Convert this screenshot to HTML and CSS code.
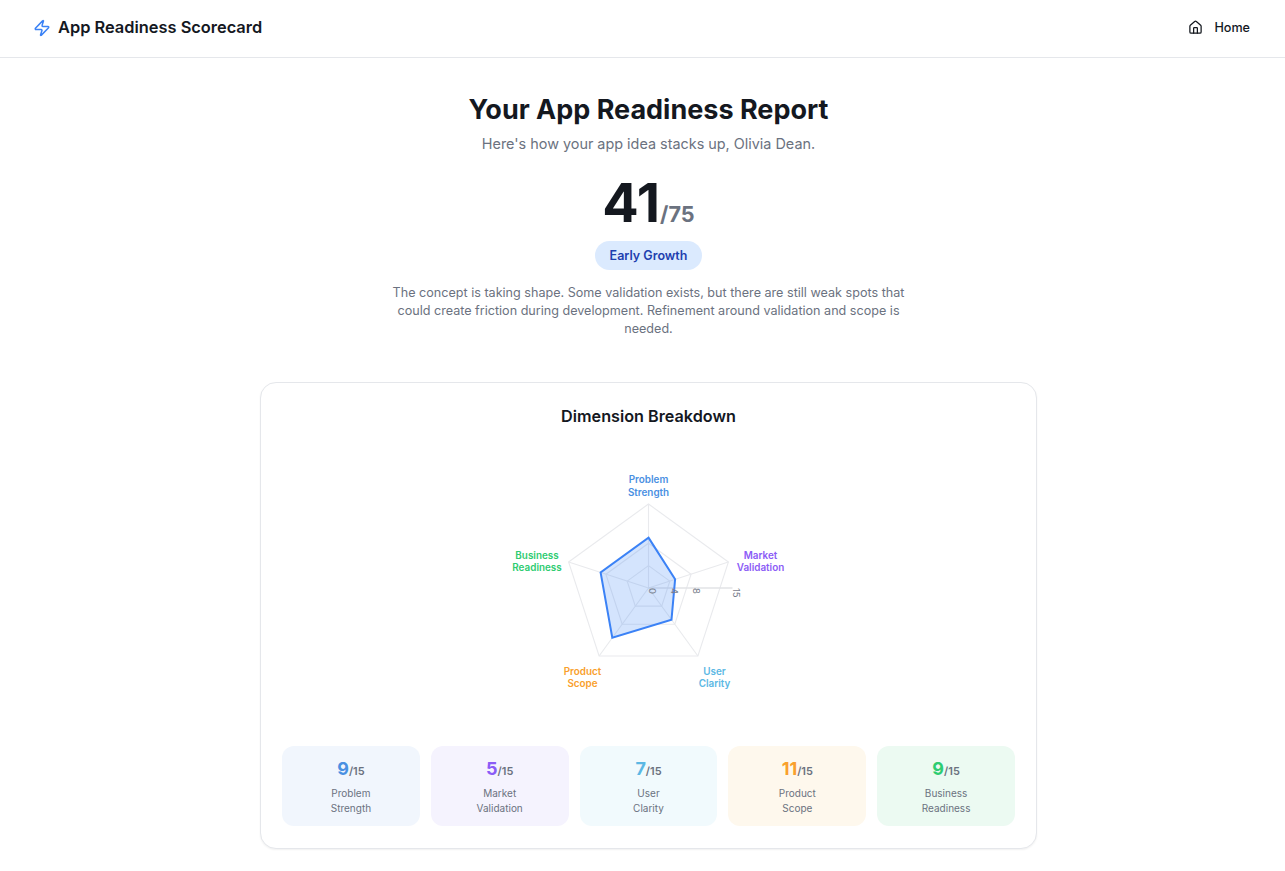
FILE: index.html
```html
<!DOCTYPE html>
<html lang="en">
<head>
    <meta charset="UTF-8">
    <meta name="viewport" content="width=device-width, initial-scale=1.0">
    <title>App Readiness Scorecard</title>
    <link rel="stylesheet" href="styles.css">
</head>
<body>
    <header class="navbar">
        <div class="brand">
            <svg class="brand-icon" viewBox="0 0 24 24" fill="none" stroke="currentColor" stroke-width="2" stroke-linecap="round" stroke-linejoin="round">
                <path d="M4 14a1 1 0 0 1-.78-1.63l9.9-10.2a.5.5 0 0 1 .86.46l-1.92 6.02A1 1 0 0 0 13 10h7a1 1 0 0 1 .78 1.63l-9.9 10.2a.5.5 0 0 1-.86-.46l1.92-6.02A1 1 0 0 0 11 14z"/>
            </svg>
            <span>App Readiness Scorecard</span>
        </div>
        <a class="home-link" href="#">
            <svg class="home-icon" viewBox="0 0 24 24" fill="none" stroke="currentColor" stroke-width="2" stroke-linecap="round" stroke-linejoin="round">
                <path d="M15 21v-8a1 1 0 0 0-1-1h-4a1 1 0 0 0-1 1v8"/>
                <path d="M3 10a2 2 0 0 1 .709-1.528l7-5.999a2 2 0 0 1 2.582 0l7 5.999A2 2 0 0 1 21 10v9a2 2 0 0 1-2 2H5a2 2 0 0 1-2-2z"/>
            </svg>
            <span>Home</span>
        </a>
    </header>

    <main class="report">
        <h1>Your App Readiness Report</h1>
        <p class="subtitle">Here's how your app idea stacks up, Olivia Dean.</p>
        <div class="total"><span class="total-score">41</span><span class="total-max">/75</span></div>
        <div class="stage-pill">Early Growth</div>
        <p class="summary">The concept is taking shape. Some validation exists, but there are still weak spots that could create friction during development. Refinement around validation and scope is needed.</p>

        <section class="card">
            <h2>Dimension Breakdown</h2>

            <!-- Radar chart, origin is the centre of the pentagon -->
            <svg class="radar" viewBox="-199.5 -140 400 280" width="400" height="280">
                <g class="radar-grid">
                    <polygon points="0,-84 79.9,-26 49.4,68 -49.4,68 -79.9,-26"/>
                    <polygon points="0,-44.8 42.6,-13.8 26.3,36.2 -26.3,36.2 -42.6,-13.8"/>
                    <polygon points="0,-22.4 21.3,-6.9 13.2,18.1 -13.2,18.1 -21.3,-6.9"/>
                    <line x1="0" y1="0" x2="0" y2="-84"/>
                    <line x1="0" y1="0" x2="79.9" y2="-26"/>
                    <line x1="0" y1="0" x2="49.4" y2="68"/>
                    <line x1="0" y1="0" x2="-49.4" y2="68"/>
                    <line x1="0" y1="0" x2="-79.9" y2="-26"/>
                </g>
                <line class="radar-axis" x1="0" y1="0" x2="84" y2="0"/>
                <polygon class="radar-data" points="0,-50.4 26.6,-8.7 23,31.7 -36.2,49.8 -47.9,-15.6"/>
                <g class="radar-ticks">
                    <text transform="translate(0 0) rotate(90)">0</text>
                    <text transform="translate(22.4 0) rotate(90)">4</text>
                    <text transform="translate(44.8 0) rotate(90)">8</text>
                    <text transform="translate(84 0) rotate(90)">15</text>
                </g>
                <g class="radar-labels">
                    <text class="c-problem"><tspan x="0" y="-105">Problem</tspan><tspan x="0" y="-92">Strength</tspan></text>
                    <text class="c-market"><tspan x="112" y="-29">Market</tspan><tspan x="112" y="-17">Validation</tspan></text>
                    <text class="c-user"><tspan x="66" y="87">User</tspan><tspan x="66" y="99">Clarity</tspan></text>
                    <text class="c-scope"><tspan x="-66" y="87">Product</tspan><tspan x="-66" y="99">Scope</tspan></text>
                    <text class="c-business"><tspan x="-111.5" y="-29">Business</tspan><tspan x="-111.5" y="-17">Readiness</tspan></text>
                </g>
            </svg>

            <div class="tiles">
                <div class="tile tile-problem">
                    <div class="tile-value"><strong class="c-problem">9</strong><span>/15</span></div>
                    <div class="tile-label">Problem<br>Strength</div>
                </div>
                <div class="tile tile-market">
                    <div class="tile-value"><strong class="c-market">5</strong><span>/15</span></div>
                    <div class="tile-label">Market<br>Validation</div>
                </div>
                <div class="tile tile-user">
                    <div class="tile-value"><strong class="c-user">7</strong><span>/15</span></div>
                    <div class="tile-label">User<br>Clarity</div>
                </div>
                <div class="tile tile-scope">
                    <div class="tile-value"><strong class="c-scope">11</strong><span>/15</span></div>
                    <div class="tile-label">Product<br>Scope</div>
                </div>
                <div class="tile tile-business">
                    <div class="tile-value"><strong class="c-business">9</strong><span>/15</span></div>
                    <div class="tile-label">Business<br>Readiness</div>
                </div>
            </div>
        </section>
    </main>
</body>
</html>
```

FILE: styles.css
```css
* {
    box-sizing: border-box;
}
body {
    font-family: Inter, "Liberation Sans", sans-serif;
    margin: 0;
    background-color: #ffffff;
    color: #14181f;
}
.navbar {
    display: flex;
    align-items: center;
    justify-content: space-between;
    height: 58px;
    padding: 0 35px 3px 33px;
    border-bottom: 1px solid #e5e7eb;
}
.brand {
    display: flex;
    align-items: center;
    gap: 7px;
    font-size: 16.4px;
    font-weight: 600;
}
.brand-icon {
    width: 18px;
    height: 18px;
    margin-top: 2px;
    color: #3b82f6;
}
.home-link {
    display: flex;
    align-items: center;
    gap: 11px;
    font-size: 12.6px;
    font-weight: 500;
    color: #14181f;
    text-decoration: none;
}
.home-icon {
    width: 15px;
    height: 15px;
    margin-top: 1px;
}
.report {
    display: flex;
    flex-direction: column;
    align-items: center;
    padding: 35px 0 21px 12px;
    text-align: center;
}
h1 {
    margin: 0;
    font-size: 27px;
    line-height: 34px;
    font-weight: 700;
}
.subtitle {
    margin: 7px 0 0;
    font-size: 14.4px;
    line-height: 20px;
    color: #6b7280;
}
.total {
    margin-top: 18px;
    height: 62px;
    line-height: 62px;
}
.total-score {
    font-size: 54px;
    font-weight: 700;
}
.total-max {
    font-size: 21.6px;
    font-weight: 700;
    color: #6b7280;
}
.stage-pill {
    margin-top: 7px;
    padding: 0 15px;
    height: 29px;
    line-height: 29px;
    border-radius: 15px;
    background-color: #dbeafe;
    color: #1e40af;
    font-size: 12.5px;
    font-weight: 600;
}
.summary {
    width: 530px;
    margin: 14px 0 0;
    font-size: 12.6px;
    line-height: 17.8px;
    color: #6b7280;
}
.card {
    width: 777px;
    margin-top: 44.5px;
    padding: 22px 21px;
    border: 1px solid #e5e7eb;
    border-radius: 16px;
    background-color: white;
    box-shadow: 0 1px 2px rgba(0, 0, 0, 0.06);
}
h2 {
    margin: 0;
    font-size: 16.2px;
    line-height: 22px;
    font-weight: 600;
}
.radar {
    display: block;
    margin: 21px auto 18px;
}
.radar-grid polygon,
.radar-grid line {
    fill: none;
    stroke: #e9eaed;
    stroke-width: 1.1;
}
.radar-axis {
    stroke: #e2e3e6;
    stroke-width: 1.5;
}
.radar-data {
    fill: rgba(59, 130, 246, 0.22);
    stroke: #3b82f6;
    stroke-width: 2;
}
.radar-ticks text {
    font-size: 9.5px;
    fill: #7a808c;
}
.radar-labels text {
    font-size: 9.9px;
    font-weight: 600;
    text-anchor: middle;
}
.c-problem {
    color: #4a90e2;
    fill: #4a90e2;
}
.c-market {
    color: #8b5cf6;
    fill: #8b5cf6;
}
.c-user {
    color: #5bb8e4;
    fill: #5bb8e4;
}
.c-scope {
    color: #f9a02c;
    fill: #f9a02c;
}
.c-business {
    color: #2ecc71;
    fill: #2ecc71;
}
.tiles {
    display: grid;
    grid-template-columns: repeat(5, 1fr);
    gap: 11px;
}
.tile {
    height: 80px;
    padding-top: 11px;
    border-radius: 12px;
}
.tile-problem {
    background-color: #f1f6fd;
}
.tile-market {
    background-color: #f5f3fe;
}
.tile-user {
    background-color: #f1fafd;
}
.tile-scope {
    background-color: #fef8ed;
}
.tile-business {
    background-color: #ecfaf2;
}
.tile-value {
    height: 24px;
    line-height: 24px;
}
.tile-value strong {
    font-size: 18px;
    font-weight: 700;
}
.tile-value span {
    font-size: 11px;
    font-weight: 600;
    color: #6b7280;
}
.tile-label {
    margin-top: 5px;
    font-size: 10px;
    line-height: 15px;
    color: #6b7280;
}
```
